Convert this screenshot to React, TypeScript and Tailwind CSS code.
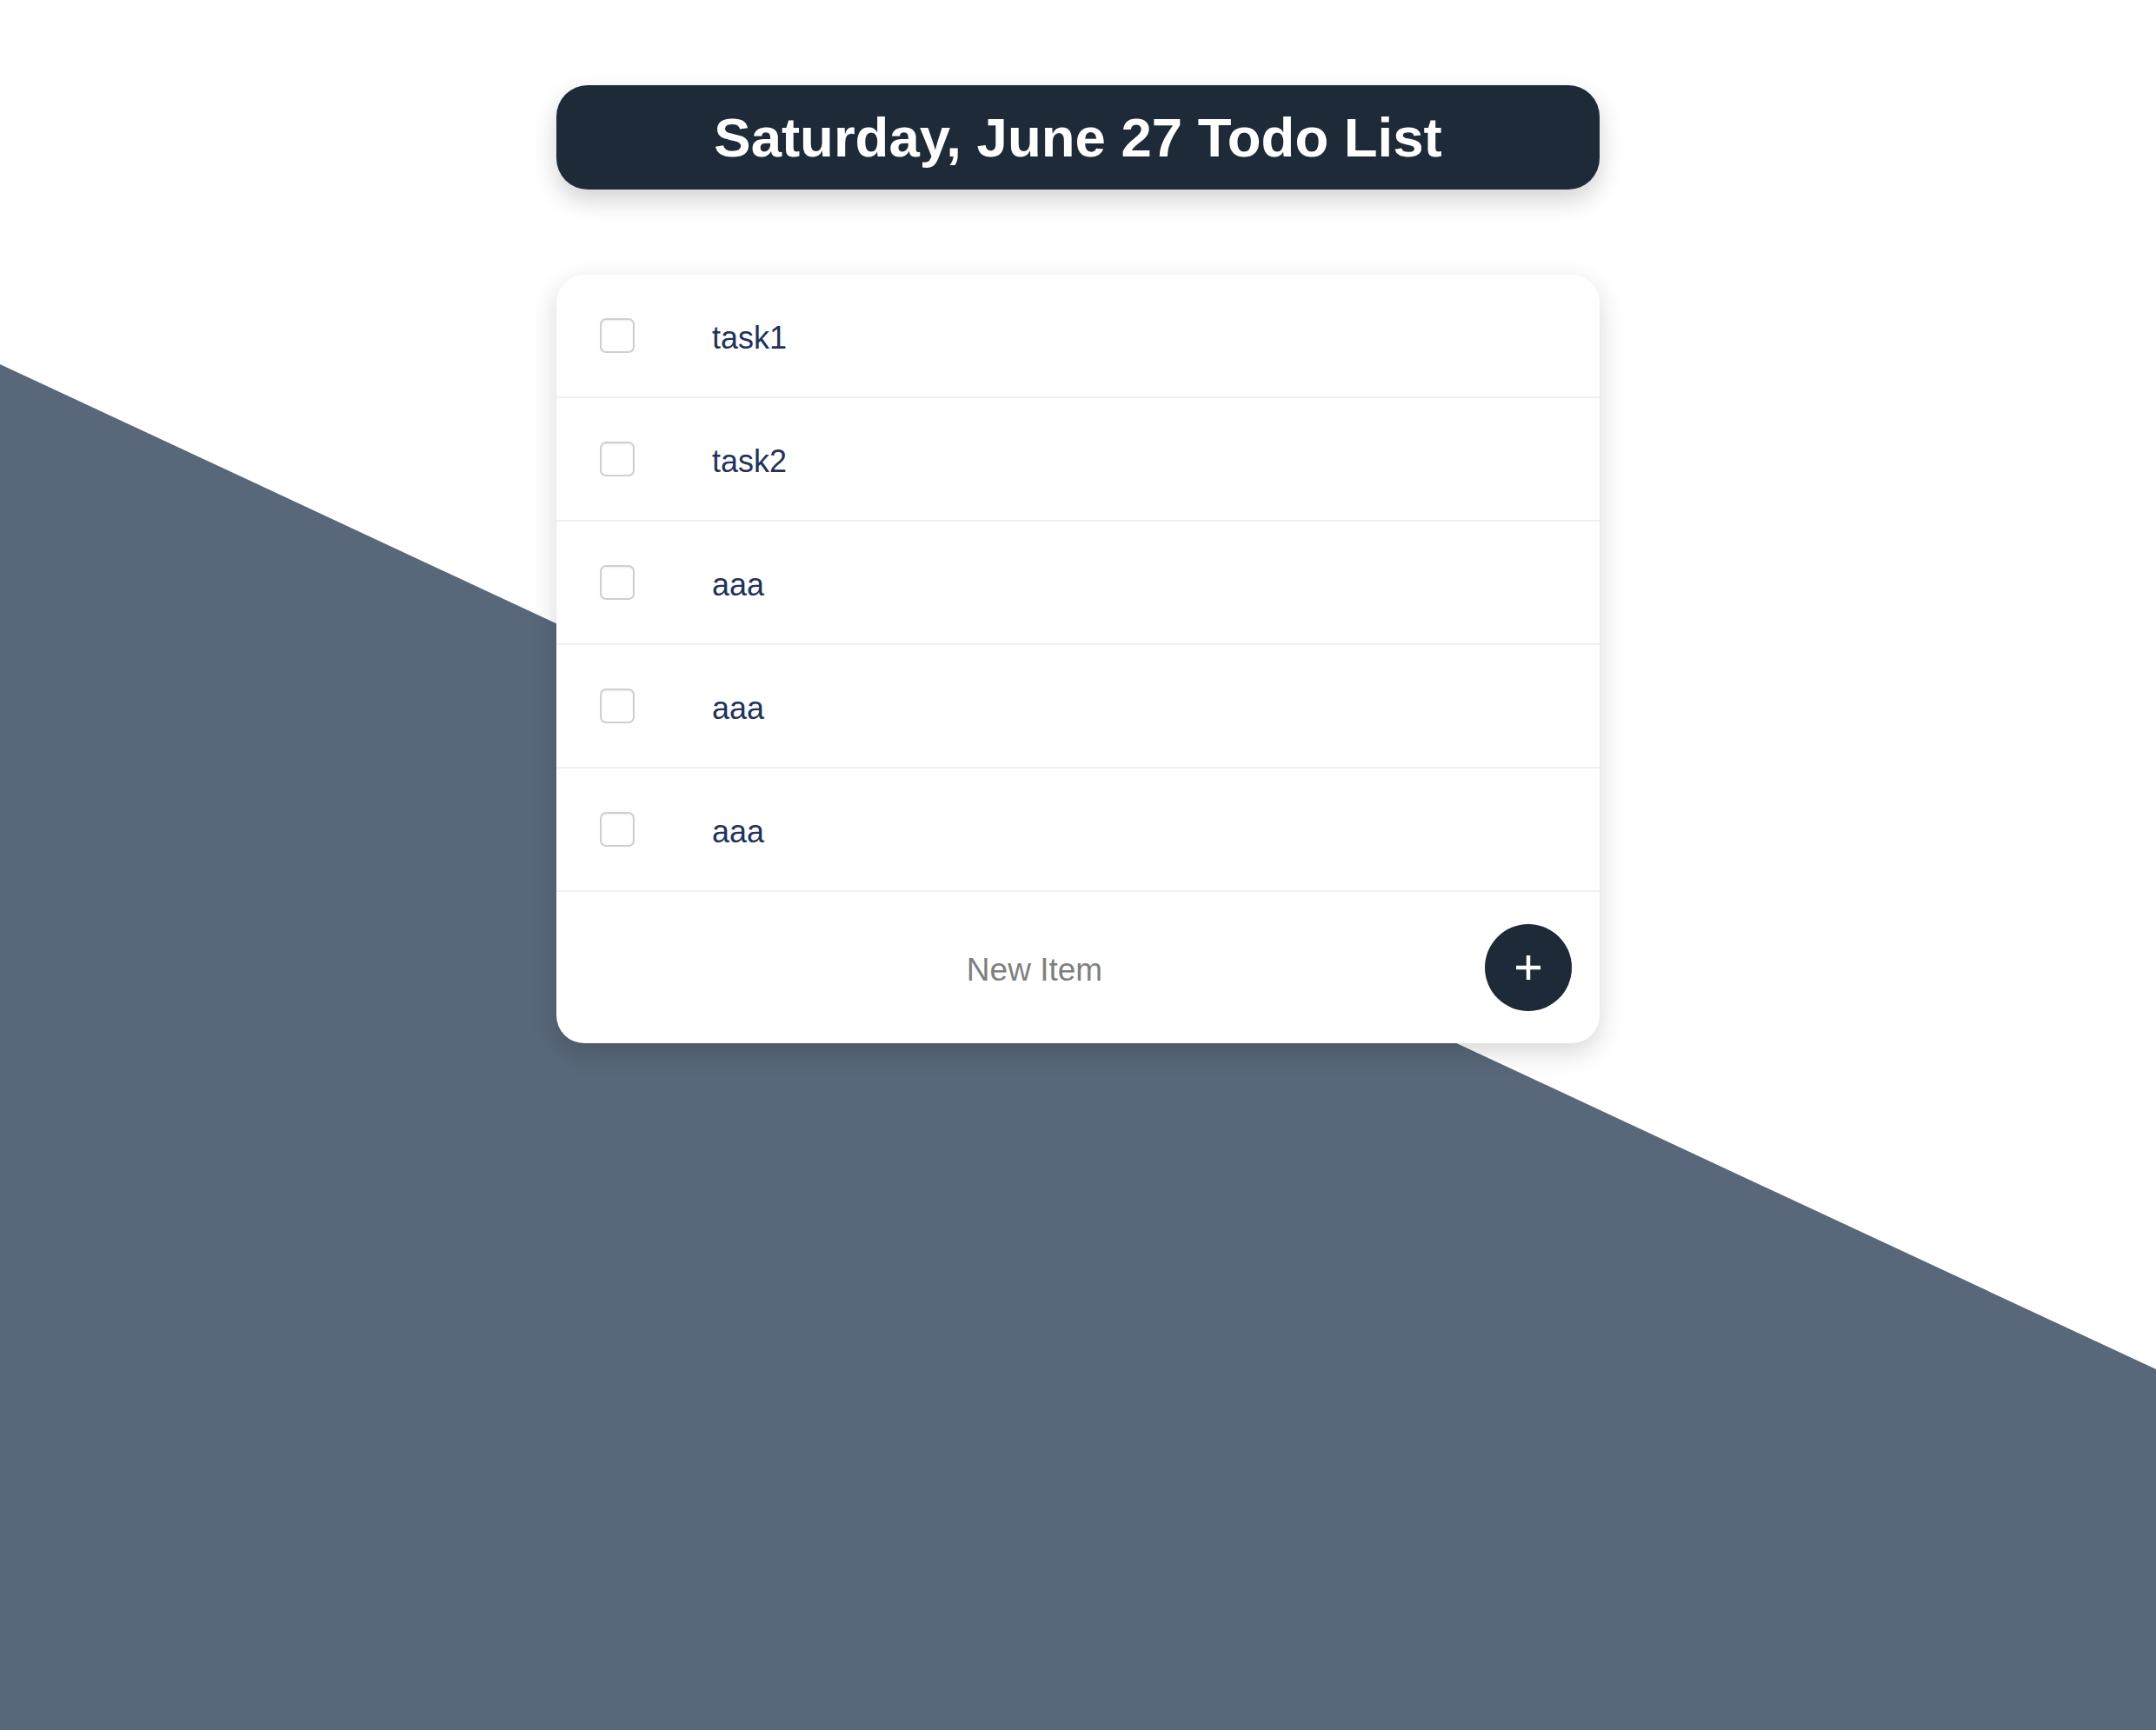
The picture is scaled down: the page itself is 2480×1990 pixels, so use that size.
import React from "react";

const tasks = ["task1", "task2", "aaa", "aaa", "aaa"];

export default function App() {
  return (
    <div
      className="relative min-h-[1990px] w-full overflow-hidden bg-white"
      style={{ fontFamily: '"Liberation Sans", Arial, Helvetica, sans-serif' }}
    >
      <div className="pointer-events-none absolute inset-0 bg-[#586779] [clip-path:polygon(0_21.05%,100%_79.15%,100%_100%,0_100%)]" />
      <div className="relative flex flex-col items-center pt-[98px]">
        <div className="flex h-[120px] w-[1200px] items-center justify-center rounded-[36px] bg-[#1e2a38] shadow-[0_12px_28px_rgba(0,0,0,0.18)]">
          <h1 className="pt-[2px] text-[63.5px] font-bold leading-none text-white">
            Saturday, June 27 Todo List
          </h1>
        </div>

        <div className="mt-[98px] w-[1200px] overflow-hidden rounded-[32px] bg-white shadow-[0_10px_30px_rgba(0,0,0,0.16)]">
          {tasks.map((t, i) => (
            <div
              key={i}
              className="flex h-[142px] items-center border-b-2 border-[#f0f0f0] pl-[50px]"
            >
              <div className="h-[40px] w-[40px] rounded-[7px] border-2 border-[#cfcfcf] bg-white shadow-[inset_0_1px_2px_rgba(0,0,0,0.08)]" />
              <span className="ml-[89px] pt-[6px] text-[36px] leading-none text-[#22325a]">
                {t}
              </span>
            </div>
          ))}
          <div className="flex h-[174px] items-center pl-[32px] pr-[32px]">
            <input
              className="h-[80px] flex-1 bg-transparent pt-[5px] text-center text-[37px] text-[#333] outline-none placeholder:text-[#7f7f7f]"
              placeholder="New Item"
              style={{ fontFamily: '"Liberation Sans", Arial, sans-serif' }}
            />
            <button className="flex h-[100px] w-[100px] items-center justify-center rounded-full bg-[#1e2a38]">
              <svg width="30" height="30" viewBox="0 0 30 30">
                <path d="M15 1v28M1 15h28" stroke="white" strokeWidth="4.5" />
              </svg>
            </button>
          </div>
        </div>
      </div>
    </div>
  );
}
